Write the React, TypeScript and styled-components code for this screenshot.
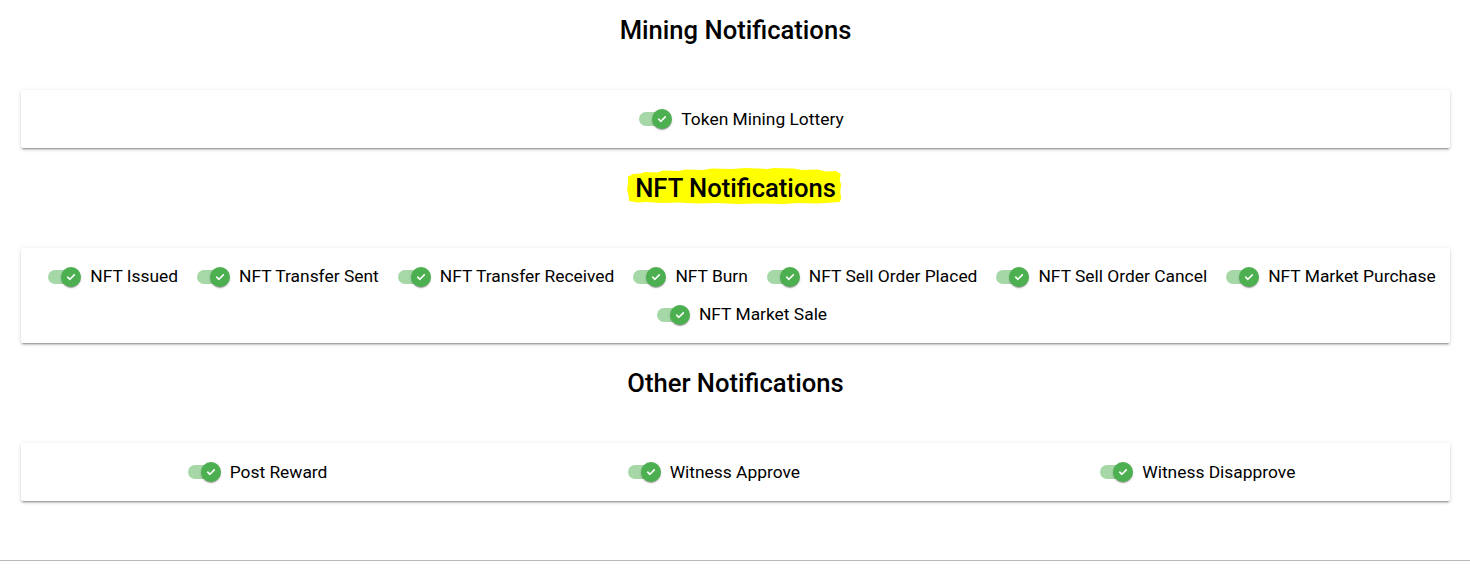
import React from 'react';
import styled, { createGlobalStyle } from 'styled-components';

const GlobalStyle = createGlobalStyle`
    body {
        margin: 0;
        background: #ffffff;
        font-family: Roboto, "Noto Sans", Arial, sans-serif;
    }
`;

const Main = styled.div`
    box-sizing: border-box;
    height: 561px;
    padding: 0 20px 0 21px;
    background: #ffffff;
    border-bottom: 1px solid #b8b8b8;
    box-shadow: 0 1px 2px rgba(0, 0, 0, 0.3), 0 3px 4px rgba(0, 0, 0, 0.12);
    display: flex;
    flex-direction: column;
    gap: 10px;
`;

const Section = styled.section`
    display: flex;
    flex-direction: column;
`;

const Title = styled.h2`
    margin: 16px 0 46px;
    text-align: center;
    font-size: 25.6px;
    line-height: 28px;
    font-weight: 500;
    color: #000000;
`;

const Marked = styled.span`
    position: relative;
    z-index: 0;
    svg {
        position: absolute;
        left: -8px;
        top: -5px;
        width: calc(100% + 14px);
        height: 36px;
        z-index: -1;
    }
`;

const Card = styled.div`
    background: #ffffff;
    border-radius: 2px;
    padding: 10px 0 9.5px 21px;
    box-shadow: 0 3px 1px -2px rgba(0, 0, 0, 0.2), 0 2px 2px 0 rgba(0, 0, 0, 0.14), 0 1px 5px 0 rgba(0, 0, 0, 0.12);
`;

// wide rows get a few px of extra room so the long label line does not wrap early
const Row = styled.div<{ $justify: string; $wide?: boolean }>`
    display: flex;
    flex-wrap: wrap;
    margin: ${p => (p.$wide ? '0 -6px 0 -5px' : '0')};
    justify-content: ${p => p.$justify};
`;

const Item = styled.label`
    display: inline-flex;
    align-items: center;
    margin-left: -11px;
    margin-right: 14px;
    font-size: 17.4px;
    line-height: 1.5;
    color: #000000;
    cursor: pointer;
`;

const SwitchRoot = styled.span`
    position: relative;
    box-sizing: border-box;
    width: 58px;
    height: 38px;
    padding: 12px 10px 12px 16px;
    flex-shrink: 0;
`;

const Track = styled.span`
    display: block;
    width: 100%;
    height: 100%;
    border-radius: 7px;
    background: #4caf50;
    opacity: 0.5;
`;

const Thumb = styled.span`
    position: absolute;
    top: 9px;
    left: 29px;
    width: 20px;
    height: 20px;
    border-radius: 50%;
    background: #4caf50;
    display: flex;
    align-items: center;
    justify-content: center;
    box-shadow: 0 2px 1px -1px rgba(0, 0, 0, 0.2), 0 1px 1px 0 rgba(0, 0, 0, 0.14), 0 1px 3px 0 rgba(0, 0, 0, 0.12);
`;

const Toggle = ({ label }: { label: string }) => (
    <Item>
        <SwitchRoot>
            <Track />
            <Thumb>
                <svg width="20" height="20" viewBox="0 0 20 20">
                    <path d="M6.7 10.2 L8.9 12.3 L13.3 7.9" fill="none" stroke="#fff" strokeWidth="1.6" strokeLinecap="round" strokeLinejoin="round" />
                </svg>
            </Thumb>
        </SwitchRoot>
        {label}
    </Item>
);

const nftItems = [
    'NFT Issued',
    'NFT Transfer Sent',
    'NFT Transfer Received',
    'NFT Burn',
    'NFT Sell Order Placed',
    'NFT Sell Order Cancel',
    'NFT Market Purchase',
    'NFT Market Sale',
];

const otherItems = ['Post Reward', 'Witness Approve', 'Witness Disapprove'];

const App = () => {
    return (
        <>
            <GlobalStyle />
            <Main>
                <Section>
                    <Title>Mining Notifications</Title>
                    <Card>
                        <Row $justify="center">
                            <Toggle label="Token Mining Lottery" />
                        </Row>
                    </Card>
                </Section>
                <Section>
                    <Title>
                        <Marked>
                            <svg viewBox="0 0 214 36" preserveAspectRatio="none">
                                <path
                                    d="M1 8 L4 7.5 L5 6 L14 5.5 L18 4 L30 4.5 L36 2.5 L52 3 L58 1.5 L76 2 L84 0.5 L104 1 L118 0 L140 1 L146 0 L166 0.5 L174 2 L190 1.5 L198 3.5 L208 3 L213 6 L212 12 L213.5 17 L212.5 24 L213.5 30 L212 34 L204 34.5 L190 35.5 L170 35 L156 36 L130 35.5 L110 36 L90 35 L70 35.5 L52 34.5 L34 35 L20 34 L10 34.5 L2 33 L1.5 27 L0 22 L1 15 Z"
                                    fill="#ffff00"
                                />
                            </svg>
                            NFT Notifications
                        </Marked>
                    </Title>
                    <Card>
                        <Row $justify="center" $wide>
                            {nftItems.map(n => (
                                <Toggle key={n} label={n} />
                            ))}
                        </Row>
                    </Card>
                </Section>
                <Section>
                    <Title>Other Notifications</Title>
                    <Card>
                        <Row $justify="space-around">
                            {otherItems.map(n => (
                                <Toggle key={n} label={n} />
                            ))}
                        </Row>
                    </Card>
                </Section>
            </Main>
        </>
    );
};

export default App;
